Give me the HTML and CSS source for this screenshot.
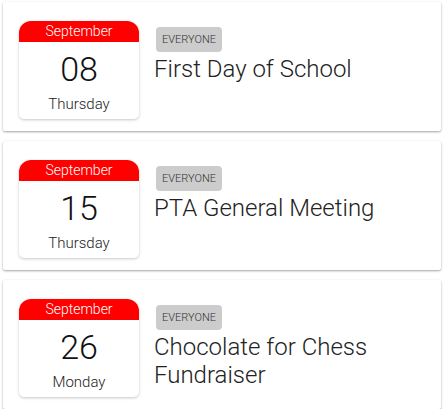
FILE: index.html
```html
<!DOCTYPE html>
<html>
<head>
<meta charset="utf-8">
<link rel="stylesheet" href="styles.css">
</head>
<body>
<div class="list">
  <div class="card">
    <div class="date">
      <div class="month">September</div>
      <div class="num">08</div>
      <div class="day">Thursday</div>
    </div>
    <div class="info">
      <span class="badge">EVERYONE</span>
      <div class="title">First Day of School</div>
    </div>
  </div>
  <div class="card">
    <div class="date">
      <div class="month">September</div>
      <div class="num">15</div>
      <div class="day">Thursday</div>
    </div>
    <div class="info">
      <span class="badge">EVERYONE</span>
      <div class="title">PTA General Meeting</div>
    </div>
  </div>
  <div class="card">
    <div class="date">
      <div class="month">September</div>
      <div class="num">26</div>
      <div class="day">Monday</div>
    </div>
    <div class="info">
      <span class="badge">EVERYONE</span>
      <div class="title">Chocolate for Chess Fundraiser</div>
    </div>
  </div>
</div>
</body>
</html>
```
FILE: styles.css
```css
html, body {
  margin: 0;
  padding: 0;
  background: #fff;
  font-family: Roboto, "Liberation Sans", sans-serif;
}
.list {
  display: flex;
  flex-direction: column;
  gap: 10px;
  padding: 2px 7px 0 3px;
}
.card {
  display: flex;
  align-items: flex-start;
  height: 129px;
  box-sizing: border-box;
  padding: 19px 16px 12px 16px;
  background: #fff;
  border-radius: 2px;
  box-shadow: 0 1px 3px rgba(0,0,0,0.12), 0 1px 2px rgba(0,0,0,0.26);
}
.date {
  width: 120px;
  height: 98px;
  flex: none;
  display: flex;
  flex-direction: column;
  align-items: center;
  border-radius: 12px 12px 5px 5px;
  background: #fff;
  box-shadow: 0 1px 3px rgba(0,0,0,0.22);
  overflow: hidden;
}
.month {
  width: 100%;
  height: 21px;
  background: #ff0000;
  color: #fff;
  font-size: 14px;
  line-height: 21px;
  text-align: center;
  font-weight: 300;
}
.num {
  font-size: 34px;
  font-weight: 300;
  color: #111;
  line-height: 40px;
  margin-top: 7px;
}
.day {
  font-size: 15px;
  font-weight: 300;
  color: #222;
  line-height: 18px;
  margin-top: 6px;
}
.info {
  display: flex;
  flex-direction: column;
  align-items: flex-start;
  padding-left: 15px;
  padding-top: 6px;
}
.badge {
  margin-left: 2px;
  height: 25px;
  line-height: 25px;
  padding: 0 6px;
  background: #cccccc;
  color: #333;
  font-size: 11px;
  font-weight: 300;
  border-radius: 4px;
}
.title {
  margin-top: 3px;
  font-size: 24px;
  font-weight: 300;
  line-height: 28px;
  color: #222;
}
```
